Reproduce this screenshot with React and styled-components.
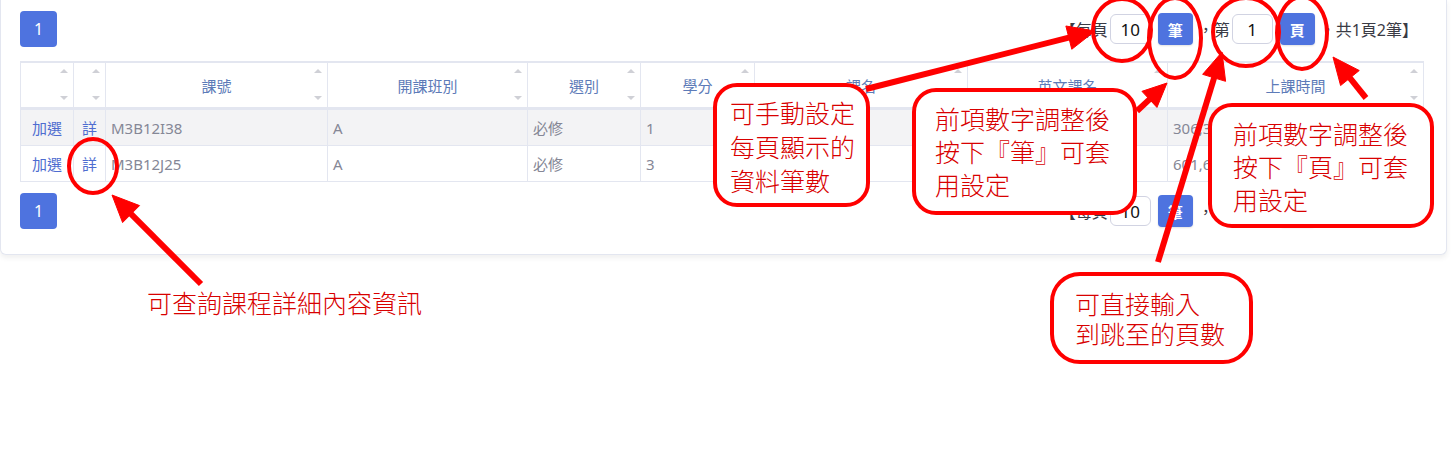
import React from 'react';
import styled, { createGlobalStyle } from 'styled-components';

const GlobalStyle = createGlobalStyle`
  body {
    margin: 0;
    background: #fff;
    font-family: "Noto Sans", "Noto Sans CJK TC", sans-serif;
  }
`;

const Page = styled.div`
  position: relative;
  width: 1453px;
  height: 453px;
  overflow: hidden;
`;

const Card = styled.div`
  width: 1447px;
  box-sizing: border-box;
  background: #fff;
  border: 1px solid #e3e6f0;
  border-top: none;
  border-radius: 0 0 6px 6px;
  box-shadow: 0 3px 5px rgba(58, 59, 69, 0.08);
  padding: 11px 22px 25px 19px;
`;

const PagerRow = styled.div`
  display: flex;
  justify-content: space-between;
  align-items: center;
  height: 36px;
  margin-bottom: ${p => p.$gap || 0}px;
  margin-top: ${p => p.$top || 0}px;
`;

const PageBtn = styled.div`
  width: 37px;
  height: 36px;
  border-radius: 4px;
  background: #4e73df;
  color: #fff;
  font-size: 16px;
  display: flex;
  align-items: center;
  justify-content: center;
`;

const Pager = styled.div`
  display: flex;
  align-items: center;
  color: #3a3b45;
  font-size: 16px;
  margin-right: 6px;
`;

const NumInput = styled.input`
  width: 41px;
  height: 30px;
  box-sizing: border-box;
  border: 1px solid #d1d3e2;
  border-radius: 6px;
  text-align: center;
  font-family: "Noto Sans", sans-serif;
  font-size: 17px;
  color: #111;
  padding: 0;
  margin-left: 2px;
  outline: none;
`;

const GoBtn = styled.button`
  width: 35px;
  height: 32px;
  border: none;
  border-radius: 4px;
  background: #4e73df;
  color: #fff;
  font-family: "Noto Sans CJK TC", sans-serif;
  font-weight: 700;
  font-size: 15px;
  padding: 0;
  margin: 0 5px 0 7px;
  box-shadow: 0 1px 2px rgba(0, 0, 0, 0.12);
`;

const Table = styled.table`
  width: 1404px;
  table-layout: fixed;
  border-collapse: separate;
  border-spacing: 0;
  font-size: 15px;
`;

const Th = styled.th`
  position: relative;
  box-sizing: border-box;
  height: 49px;
  padding: 0;
  font-weight: 400;
  color: #5d7bb8;
  text-align: center;
  border-top: 2px solid #e3e6f0;
  border-bottom: 3px solid #e3e6f0;
  border-right: 1px solid #e3e6f0;
  &:first-child { border-left: 1px solid #e3e6f0; }
  &::before, &::after {
    content: "";
    position: absolute;
    right: 5px;
    border-left: 4px solid transparent;
    border-right: 4px solid transparent;
  }
  &::before { top: 6px; border-bottom: 4px solid #cfd0d6; }
  &::after { bottom: 7px; border-top: 4px solid #cfd0d6; }
`;

const Tr = styled.tr`
  background: ${p => (p.$striped ? '#f3f3f5' : '#fff')};
`;

const Td = styled.td`
  box-sizing: border-box;
  height: 36px;
  padding: 0 5px;
  color: ${p => (p.$link ? '#4e6cd0' : '#858796')};
  text-align: ${p => (p.$center ? 'center' : 'left')};
  white-space: nowrap;
  overflow: hidden;
  border-right: 1px solid #e3e6f0;
  border-bottom: 1px solid #e3e6f0;
  &:first-child { border-left: 1px solid #e3e6f0; }
`;

const Overlay = styled.svg`
  position: absolute;
  left: 0;
  top: 0;
  pointer-events: none;
`;

const Callout = styled.div`
  position: absolute;
  left: ${p => p.$x}px;
  top: ${p => p.$y}px;
  width: ${p => p.$w}px;
  height: ${p => p.$h}px;
  box-sizing: border-box;
  border: 4px solid #ff0000;
  border-radius: ${p => p.$r || 24}px;
  background: #fff;
  padding: ${p => p.$pt}px 0 0 ${p => p.$pl}px;
  color: #d80000;
  font-family: "Noto Sans CJK TC", sans-serif;
  font-weight: 300;
  font-size: 25px;
  line-height: ${p => p.$lh || 33}px;
  white-space: nowrap;
`;

const Note = styled.div`
  position: absolute;
  left: 147px;
  top: 285px;
  color: #d80000;
  font-family: "Noto Sans CJK TC", sans-serif;
  font-weight: 300;
  font-size: 25px;
  line-height: 34px;
`;

const columns = [
  { w: 54, label: '' },
  { w: 32, label: '' },
  { w: 222, label: '課號' },
  { w: 200, label: '開課班別' },
  { w: 113, label: '選別' },
  { w: 114, label: '學分' },
  { w: 213, label: '課名' },
  { w: 200, label: '英文課名' },
  { w: 256, label: '上課時間' },
];

const rows = [
  { code: 'M3B12I38', cls: 'A', type: '必修', credit: '1', name: '專題研究', en: 'Project', time: '306,307' },
  { code: 'M3B12J25', cls: 'A', type: '必修', credit: '3', name: '工程數學', en: 'Math', time: '601,602,603' },
];

const PagerBar = ({ gap, top }) => (
  <PagerRow $gap={gap} $top={top}>
    <PageBtn>1</PageBtn>
    <Pager>
      <span>【每頁</span>
      <NumInput defaultValue="10" />
      <GoBtn>筆</GoBtn>
      <span>，第</span>
      <NumInput defaultValue="1" />
      <GoBtn>頁</GoBtn>
      <span>，共1頁2筆】</span>
    </Pager>
  </PagerRow>
);

const arrow = (x1, y1, x2, y2, head = 27, half = 12) => {
  const len = Math.hypot(x2 - x1, y2 - y1);
  const ux = (x2 - x1) / len;
  const uy = (y2 - y1) / len;
  const bx = x2 - ux * head;
  const by = y2 - uy * head;
  const px = -uy * half;
  const py = ux * half;
  return {
    line: [x1, y1, bx + ux * 3, by + uy * 3],
    head: `${x2},${y2} ${bx + px},${by + py} ${bx - px},${by - py}`,
  };
};

const arrows = [
  arrow(866, 89, 1095, 31),
  arrow(1137, 111, 1167, 83, 24, 11),
  arrow(1158, 262, 1222, 52),
  arrow(1366, 98, 1333, 57),
  arrow(201, 284, 112, 195),
];

const ellipses = [
  { cx: 1122, cy: 30, rx: 29, ry: 31 },
  { cx: 1175, cy: 38, rx: 26, ry: 40 },
  { cx: 1246, cy: 32, rx: 33, ry: 34 },
  { cx: 1302, cy: 33, rx: 25, ry: 36 },
  { cx: 93, cy: 166, rx: 24, ry: 27 },
];

const App = () => (
  <Page>
    <GlobalStyle />
    <Card>
      <PagerBar gap={14} />
      <Table>
        <colgroup>
          {columns.map((c, i) => <col key={i} style={{ width: c.w }} />)}
        </colgroup>
        <thead>
          <tr>
            {columns.map((c, i) => <Th key={i}>{c.label}</Th>)}
          </tr>
        </thead>
        <tbody>
          {rows.map((r, i) => (
            <Tr key={r.code} $striped={i === 0}>
              <Td $center $link>加選</Td>
              <Td $center $link>詳</Td>
              <Td>{r.code}</Td>
              <Td>{r.cls}</Td>
              <Td>{r.type}</Td>
              <Td>{r.credit}</Td>
              <Td>{r.name}</Td>
              <Td>{r.en}</Td>
              <Td>{r.time}</Td>
            </Tr>
          ))}
        </tbody>
      </Table>
      <PagerBar top={11} />
    </Card>

    <Callout $x={713} $y={83} $w={157} $h={124} $pl={13} $pt={8} $lh={34}>
      可手動設定<br />每頁顯示的<br />資料筆數
    </Callout>
    <Callout $x={912} $y={88} $w={225} $h={127} $pl={19} $pt={10}>
      前項數字調整後<br />按下『筆』可套<br />用設定
    </Callout>
    <Callout $x={1208} $y={103} $w={226} $h={125} $pl={21} $pt={10}>
      前項數字調整後<br />按下『頁』可套<br />用設定
    </Callout>
    <Callout $x={1050} $y={272} $w={203} $h={92} $pl={21} $pt={12} $lh={30} $r={30}>
      可直接輸入<br />到跳至的頁數
    </Callout>
    <Note>可查詢課程詳細內容資訊</Note>

    <Overlay width="1453" height="453" viewBox="0 0 1453 453">
      {ellipses.map((e, i) => (
        <ellipse key={i} cx={e.cx} cy={e.cy} rx={e.rx} ry={e.ry} fill="none" stroke="#ff0000" strokeWidth="4" />
      ))}
      {arrows.map((a, i) => (
        <g key={i} fill="#ff0000" stroke="#ff0000">
          <line x1={a.line[0]} y1={a.line[1]} x2={a.line[2]} y2={a.line[3]} strokeWidth="6" />
          <polygon points={a.head} strokeWidth="1" />
        </g>
      ))}
    </Overlay>
  </Page>
);

export default App;
